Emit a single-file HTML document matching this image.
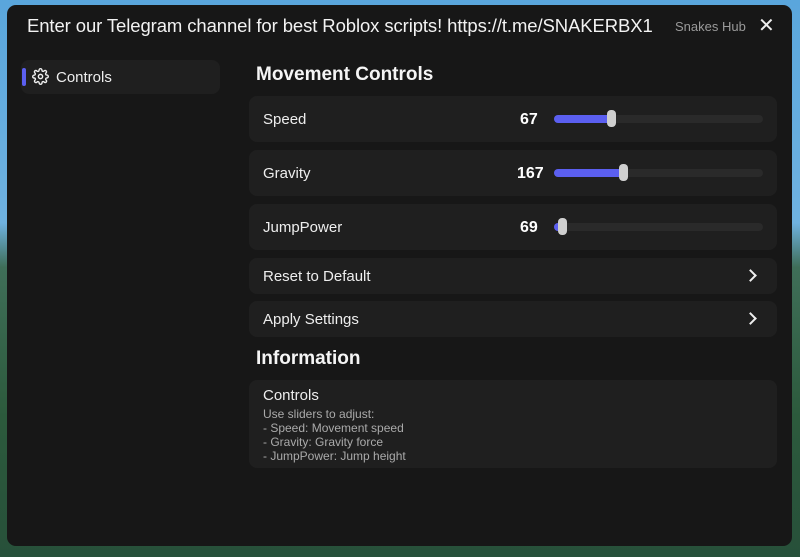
<!DOCTYPE html>
<html><head><style>
*{margin:0;padding:0;box-sizing:border-box}
body{width:800px;height:557px;overflow:hidden;font-family:"Liberation Sans",sans-serif;color:#fff;
background:linear-gradient(180deg,#5aa6dc 0%,#6fb2e0 40%,#3f6e58 48%,#2c5a3c 75%,#27503a 100%);position:relative}
.win{position:absolute;left:7px;top:5px;width:785px;height:541px;background:#171717;border-radius:9px}
.title{position:absolute;font-size:18.5px;color:#f2f2f2;white-space:nowrap;letter-spacing:-0.1px}
.sub{position:absolute;font-size:13px;color:#9a9a9a}
.x{position:absolute;font-size:20px;color:#eee}
.side{position:absolute;left:21px;top:60px;width:199px;height:34px;background:#1f1f1f;border-radius:8px}
.bar{position:absolute;left:1px;top:8px;width:4px;height:18px;background:#5b5ff0;border-radius:2px}
.side span{position:absolute;left:35px;top:9px;font-size:15px;color:#eee}
.side svg{position:absolute;left:11px;top:8px}
.h{position:absolute;left:256px;font-size:19px;font-weight:bold;color:#f5f5f5}
.card{position:absolute;left:249px;width:528px;background:#1f1f1f;border-radius:8px}
.card .l{position:absolute;left:14px;font-size:15px;color:#eee}
.val{position:absolute;font-size:16px;font-weight:bold;color:#fff}
.track{position:absolute;left:305px;width:209px;height:8px;background:#2a2a2a;border-radius:4px}
.fill{position:absolute;left:0;top:0;height:8px;background:#5b5ff0;border-radius:4px}
.thumb{position:absolute;top:-5px;width:9px;height:17px;background:#cfcfcf;border-radius:4px}
.chev{position:absolute;left:497px;width:9px;height:9px;border-right:2px solid #eee;border-top:2px solid #eee;transform:rotate(45deg)}
</style></head><body>
<div class="win">
<div class="title" style="left:20px;top:10px">Enter our Telegram channel for best Roblox scripts! https://t.me/SNAKERBX1</div>
<div class="sub" style="left:668px;top:14px">Snakes Hub</div>
<div class="x" style="left:751px;top:8px">✕</div>
</div>
<div class="side"><div class="bar"></div>
<svg width="17" height="17" viewBox="0 0 24 24" fill="none" stroke="#eee" stroke-width="2"><circle cx="12" cy="12" r="3"/><path d="M19.4 15a1.7 1.7 0 0 0 .3 1.8l.1.1a2 2 0 1 1-2.8 2.8l-.1-.1a1.7 1.7 0 0 0-1.8-.3 1.7 1.7 0 0 0-1 1.5V21a2 2 0 1 1-4 0v-.1a1.7 1.7 0 0 0-1.1-1.5 1.7 1.7 0 0 0-1.8.3l-.1.1a2 2 0 1 1-2.8-2.8l.1-.1a1.7 1.7 0 0 0 .3-1.8 1.7 1.7 0 0 0-1.5-1H3a2 2 0 1 1 0-4h.1a1.7 1.7 0 0 0 1.5-1.1 1.7 1.7 0 0 0-.3-1.8l-.1-.1a2 2 0 1 1 2.8-2.8l.1.1a1.7 1.7 0 0 0 1.8.3H9a1.7 1.7 0 0 0 1-1.5V3a2 2 0 1 1 4 0v.1a1.7 1.7 0 0 0 1 1.5 1.7 1.7 0 0 0 1.8-.3l.1-.1a2 2 0 1 1 2.8 2.8l-.1.1a1.7 1.7 0 0 0-.3 1.8V9a1.7 1.7 0 0 0 1.5 1H21a2 2 0 1 1 0 4h-.1a1.7 1.7 0 0 0-1.5 1z"/></svg>
<span>Controls</span></div>
<div class="h" style="top:64px">Movement Controls</div>
<div class="card" style="top:96px;height:46px"><div class="l" style="top:15px">Speed</div><div class="val" style="left:271px;top:15px">67</div><div class="track" style="top:19px"><div class="fill" style="width:60px"></div><div class="thumb" style="left:53px"></div></div></div>
<div class="card" style="top:150px;height:46px"><div class="l" style="top:15px">Gravity</div><div class="val" style="left:268px;top:15px">167</div><div class="track" style="top:19px"><div class="fill" style="width:72px"></div><div class="thumb" style="left:65px"></div></div></div>
<div class="card" style="top:204px;height:46px"><div class="l" style="top:15px">JumpPower</div><div class="val" style="left:271px;top:15px">69</div><div class="track" style="top:19px"><div class="fill" style="width:12px"></div><div class="thumb" style="left:4px"></div></div></div>
<div class="card" style="top:258px;height:36px"><div class="l" style="top:10px">Reset to Default</div><div class="chev" style="top:13px"></div></div>
<div class="card" style="top:301px;height:36px"><div class="l" style="top:10px">Apply Settings</div><div class="chev" style="top:13px"></div></div>
<div class="h" style="top:348px">Information</div>
<div class="card" style="top:380px;height:88px"><div class="l" style="top:7px">Controls</div>
<div style="position:absolute;left:14px;top:27px;font-size:12px;line-height:14px;color:#aaa">Use sliders to adjust:<br>- Speed: Movement speed<br>- Gravity: Gravity force<br>- JumpPower: Jump height</div></div>
</body></html>
